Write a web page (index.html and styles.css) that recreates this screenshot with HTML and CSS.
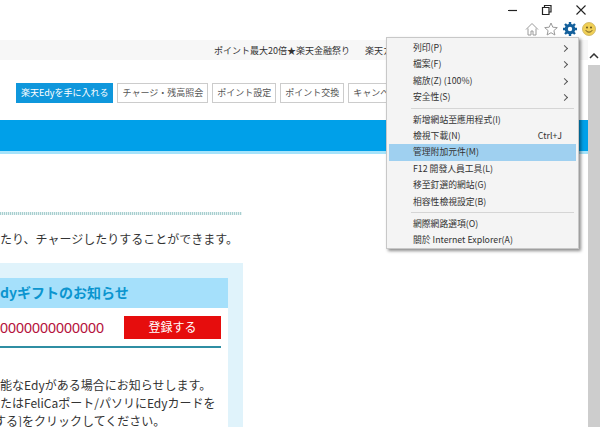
FILE: index.html
```html
<!DOCTYPE html>
<html lang="ja">
<head>
<meta charset="utf-8">
<title>楽天Edy</title>
<link rel="stylesheet" href="styles.css">
</head>
<body>
<header class="chrome">
  <div class="winctrl">
    <svg class="ic" width="12" height="12" viewBox="0 0 12 12"><path d="M1 6.500h9" stroke="#222" stroke-width="1.200"/></svg>
    <svg class="ic" width="12" height="12" viewBox="0 0 12 12"><path d="M3.500 3.500V1.500h6.500v6.500H8M1.500 3.500h6.500v7H1.500z" fill="none" stroke="#222" stroke-width="1.200"/></svg>
    <svg class="ic" width="12" height="12" viewBox="0 0 12 12"><path d="M1.500 1.500l9 9M10.500 1.500l-9 9" stroke="#222" stroke-width="1.100"/></svg>
  </div>
  <div class="tools">
    <svg width="14" height="14" viewBox="0 0 14 14"><path d="M1 7.500L7 1.500l6 6M3 6.500V13h3V9h2v4h3V6.500" fill="none" stroke="#9a9a9a" stroke-width="1"/></svg>
    <svg width="14" height="14" viewBox="0 0 14 14"><path d="M7 1l1.800 4.200 4.500.4-3.400 3 1 4.400L7 10.700 3.100 13l1-4.400-3.400-3 4.500-.4z" fill="#fff" stroke="#9a9a9a" stroke-width="1"/></svg>
    <svg width="14" height="14" viewBox="0 0 14 14"><circle cx="7" cy="7" r="3.800" fill="none" stroke="#14609c" stroke-width="3"/><path d="M7 0v14M0 7h14M2 2l10 10M12 2L2 12" stroke="#14609c" stroke-width="2.400"/><circle cx="7" cy="7" r="2.200" fill="#fff"/></svg>
    <svg width="14" height="14" viewBox="0 0 14 14"><circle cx="7" cy="7" r="6.500" fill="#f0cf55" stroke="#c9b05a" stroke-width=".8"/><circle cx="5" cy="5.500" r=".9" fill="#5a4a1c"/><circle cx="9" cy="5.500" r=".9" fill="#5a4a1c"/><path d="M3.800 8.300c1.200 2.400 5.200 2.400 6.400 0" fill="none" stroke="#5a4a1c" stroke-width=".9"/></svg>
  </div>
</header>

<div class="viewport">
  <main class="page">
    <div class="strip">
      <span>ポイント最大20倍★楽天金融祭り</span>
      <span>楽天カード</span>
    </div>
    <nav class="nav">
      <a class="btn btn-primary">楽天Edyを手に入れる</a>
      <a class="btn">チャージ・残高照会</a>
      <a class="btn">ポイント設定</a>
      <a class="btn">ポイント交換</a>
      <a class="btn">キャンペーン</a>
    </nav>
    <div class="band"></div>
    <div class="dots"></div>
    <p class="lead">たり、チャージしたりすることができます。</p>
    <section class="panel">
      <div class="card">
        <h2 class="card-title">dyギフトのお知らせ</h2>
        <div class="card-row">
          <span class="code">0000000000000</span>
          <a class="register">登録する</a>
        </div>
        <div class="rule"></div>
        <p class="note">能なEdyがある場合にお知らせします。</p>
        <p class="note">たはFeliCaポート/パソリにEdyカードを</p>
        <p class="note note-clip">する]をクリックしてください。</p>
      </div>
    </section>
  </main>
  <aside class="scrollbar">
    <div class="scroll-up"><svg width="10" height="6" viewBox="0 0 10 6"><path d="M1 5l4-4 4 4" fill="none" stroke="#333" stroke-width="1.500"/></svg></div>
    <div class="scroll-track"></div>
  </aside>
</div>

<div class="menu">
  <div class="mi sub">列印(P)</div>
  <div class="mi sub">檔案(F)</div>
  <div class="mi sub">縮放(Z) (100%)</div>
  <div class="mi sub">安全性(S)</div>
  <div class="sep"></div>
  <div class="mi">新增網站至應用程式(I)</div>
  <div class="mi"><span>檢視下載(N)</span><span class="key">Ctrl+J</span></div>
  <div class="mi active">管理附加元件(M)</div>
  <div class="mi">F12 開發人員工具(L)</div>
  <div class="mi">移至釘選的網站(G)</div>
  <div class="mi">相容性檢視設定(B)</div>
  <div class="sep"></div>
  <div class="mi">網際網路選項(O)</div>
  <div class="mi">關於 Internet Explorer(A)</div>
</div>
</body>
</html>
```
FILE: styles.css
```css
* { box-sizing: border-box; }
html, body { margin: 0; height: 427px; overflow: hidden; background: #fff; }
body {
  width: 600px;
  position: relative;
  font-family: "Noto Sans CJK JP", "Liberation Sans", sans-serif;
  color: #333;
  display: flex;
  flex-direction: column;
}
.chrome { height: 40px; flex: none; display: flex; flex-direction: column; align-items: flex-end; }
.winctrl { display: flex; gap: 22px; padding: 4px 13px 0 0; height: 22px; }
.tools { display: flex; gap: 5px; padding: 0 4px 0 0; }
.viewport { flex: 1; display: flex; min-height: 0; }
.page { width: 588px; flex: none; overflow: hidden; }
.strip {
  height: 20px; background: #f7f7f7; padding-left: 214px;
  display: flex; gap: 15px; align-items: center;
  font-size: 9px; white-space: nowrap; color: #333;
}
.nav { display: flex; gap: 4px; padding-left: 16px; margin-top: 23px; white-space: nowrap; }
.btn {
  height: 20px; padding: 0 4px; border: 1px solid #ccc; background: #fff;
  font-size: 9px; line-height: 18px; color: #555; flex: none;
}
.btn-primary { background: #0f97dc; border-color: #0f97dc; color: #fff; }
.band { height: 34px; margin-top: 17px; background: #00a0e9; border-bottom: 3px solid #a5e3fb; }
.dots {
  width: 242px; height: 3px; margin-top: 58px;
  background: repeating-linear-gradient(90deg, #a8cfd0 0 1px, #e6f2f2 1px 2px);
}
.lead { margin: 17px 0 0; font-size: 12px; line-height: 14px; white-space: nowrap; }
.panel { width: 243px; margin-top: 17px; height: 170px; padding: 15px 15px 0 0; background: #e0f3fb; }
.card { background: #fff; height: 155px; }
.card-title {
  margin: 0; height: 30px; background: #a5e0fb; color: #0b95cf;
  font-size: 14px; line-height: 29px; font-weight: 700; white-space: nowrap;
}
.card-row { display: flex; justify-content: space-between; align-items: center; width: 221px; margin-top: 8px; height: 23px; }
.code { font-size: 14.400px; color: #b5123c; font-family: "Liberation Sans", sans-serif; }
.register {
  width: 97px; height: 23px; background: #e60d0d; color: #fff;
  font-size: 12px; line-height: 22px; text-align: center;
}
.rule { width: 221px; height: 2px; margin: 7px 0 30px; background: #2f8ea3; }
.note { margin: 0 0 4px; font-size: 12px; line-height: 14px; white-space: nowrap; }
.note-clip { margin-left: -6px; }
.scrollbar { width: 12px; flex: none; display: flex; flex-direction: column; }
.scroll-up { height: 25px; display: flex; align-items: flex-end; justify-content: center; padding-bottom: 6px; }
.scroll-track { flex: 1; background: #cdcdcd; }
.menu {
  position: absolute; left: 386px; top: 37px; width: 193px; height: 212px;
  padding: 2px 2px; background: #f4f4f4; border: 1px solid #c8c8c8;
  box-shadow: 2px 2px 3px rgba(0,0,0,.45);
  font-family: "Noto Sans CJK TC", "Liberation Sans", sans-serif;
  font-size: 8.800px; color: #333;
}
.mi { height: 16.400px; line-height: 16px; padding: 0 10px 0 24px; display: flex; justify-content: space-between; white-space: nowrap; position: relative; }
.mi.sub::after {
  content: ""; position: absolute; right: 9px; top: 6px; width: 4px; height: 4px;
  border-top: 1px solid #555; border-right: 1px solid #555; transform: rotate(45deg);
}
.mi.active { background: #9fd0f0; }
.key { padding-right: 4px; }
.sep { height: 1px; margin: 2.500px 2px 2.500px 22px; background: #d5d5d5; }
```
